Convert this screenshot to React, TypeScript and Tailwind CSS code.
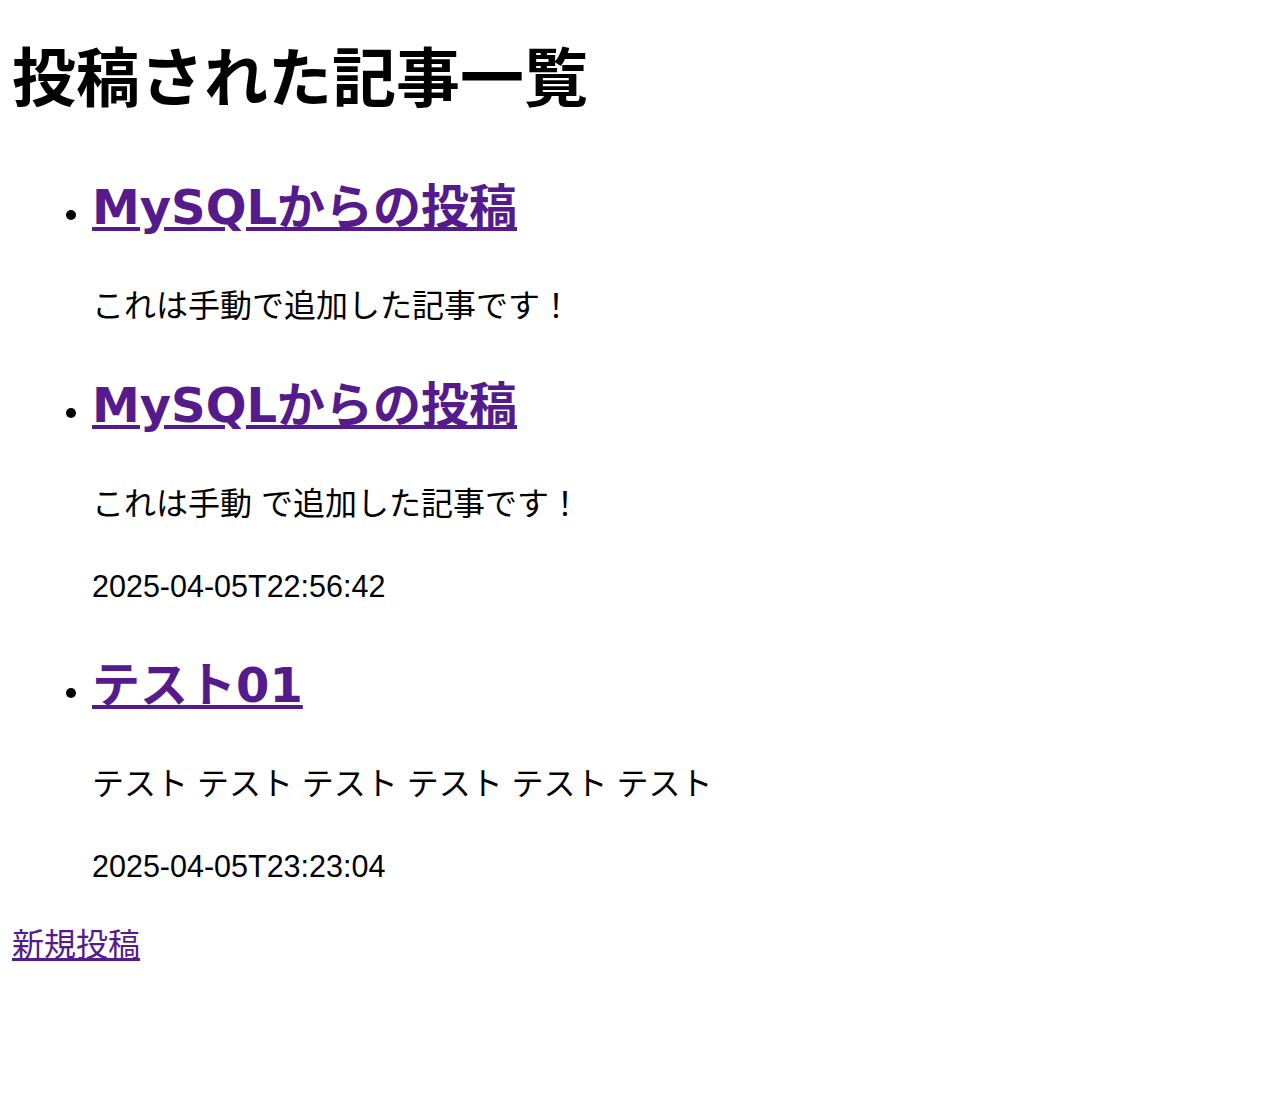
const posts = [
  { title: 'MySQLからの投稿', body: 'これは手動で追加した記事です！', createdAt: '' },
  { title: 'MySQLからの投稿', body: 'これは手動 で追加した記事です！', createdAt: '2025-04-05T22:56:42' },
  { title: 'テスト01', body: 'テスト テスト テスト テスト テスト テスト', createdAt: '2025-04-05T23:23:04' },
];

export default function App() {
  return (
    <div className="min-h-screen bg-white pl-[12px] text-black font-['Liberation_Sans','Noto_Sans_CJK_JP',sans-serif]">
      {/* Title */}
      <h1 className="pt-[25px] text-[64px] font-bold leading-[96px] font-['Noto_Sans_CJK_JP',sans-serif]">
        投稿された記事一覧
      </h1>

      {/* Post list */}
      <ul className="mt-[50px] list-disc pl-[80px] text-[32px]">
        {posts.map((post, i) => (
          <li key={i} className={i > 0 ? 'mt-[39px]' : ''}>
            <h2 className="text-[48px] font-bold leading-[72px] font-['DejaVu_Sans','Noto_Sans_CJK_JP',sans-serif]">
              <a href="#" className="text-[#551a8b] underline">
                {post.title}
              </a>
            </h2>
            <p className="mt-[39px] text-[32px] leading-[48px]">{post.body}</p>
            {post.createdAt && (
              <p className="mt-[34px] text-[30.5px] leading-[48px]">{post.createdAt}</p>
            )}
          </li>
        ))}
      </ul>

      {/* New post link */}
      <a href="#" className="mt-[31px] block w-fit text-[32px] leading-[48px] text-[#551a8b] underline">
        新規投稿
      </a>
    </div>
  );
}
